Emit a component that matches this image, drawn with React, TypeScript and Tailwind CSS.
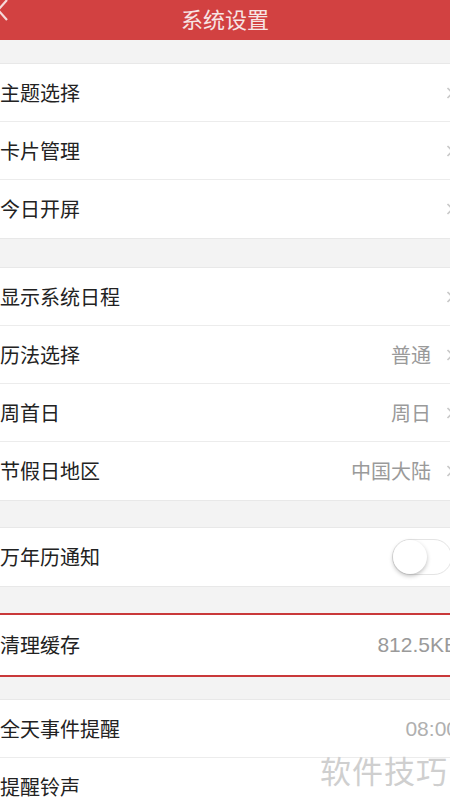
import React from 'react';

const font = { fontFamily: '"Noto Sans CJK SC", "Liberation Sans", sans-serif' };

interface Row {
  label: string;
  value?: string;
  arrow?: boolean;
}

const Chevron: React.FC = () => (
  <svg width="8" height="12" viewBox="0 0 8 12" className="shrink-0">
    <path d="M1.5 1 L6.5 6 L1.5 11" fill="none" stroke="#c9c9c9" strokeWidth="1.6" />
  </svg>
);

const SettingRow: React.FC<{ row: Row; last?: boolean }> = ({ row, last }) => (
  <div className={`flex h-[58px] items-center justify-between bg-white ${last ? '' : 'border-b border-[#ececec]'}`}>
    <span className="text-[20px] text-[#222]">{row.label}</span>
    <div className="mr-[-4px] flex items-center gap-[15px]">
      {row.value && <span className="text-[20px] text-[#9a9a9a]">{row.value}</span>}
      {row.arrow && <Chevron />}
    </div>
  </div>
);

const Group: React.FC<{ rows: Row[] }> = ({ rows }) => (
  <div className="border-y border-[#e8e8e8] bg-white">
    {rows.map((r, i) => (
      <SettingRow key={r.label} row={r} last={i === rows.length - 1} />
    ))}
  </div>
);

export default function App() {
  return (
    <div className="relative h-[801px] w-[450px] overflow-hidden bg-[#f3f3f3]" style={font}>
      {/* header */}
      <div className="relative flex h-[40px] items-center justify-center bg-[#d24141]">
        <svg width="12" height="24" viewBox="0 0 12 24" className="absolute left-[-4px] top-[-1px]">
          <path d="M11 1 L2 11 L11 21" fill="none" stroke="#f6dada" strokeWidth="2.2" />
        </svg>
        <span className="pb-[4px] text-[22px] text-[#f7e4e4]">系统设置</span>
      </div>

      <div className="h-[23px]" />
      <Group
        rows={[
          { label: '主题选择', arrow: true },
          { label: '卡片管理', arrow: true },
          { label: '今日开屏', arrow: true },
        ]}
      />

      <div className="h-[28px]" />
      <Group
        rows={[
          { label: '显示系统日程', arrow: true },
          { label: '历法选择', value: '普通', arrow: true },
          { label: '周首日', value: '周日', arrow: true },
          { label: '节假日地区', value: '中国大陆', arrow: true },
        ]}
      />

      <div className="h-[26px]" />
      <div className="border-y border-[#e8e8e8] bg-white">
        <div className="flex h-[58px] items-center justify-between">
          <span className="text-[20px] text-[#222]">万年历通知</span>
          <div className="mr-[-2px] flex h-[36px] w-[60px] items-center rounded-full border border-[#e4e4e4] bg-white">
            <div className="h-[34px] w-[34px] rounded-full bg-white shadow-[0_2px_4px_rgba(0,0,0,0.25)]" />
          </div>
        </div>
      </div>

      <div className="h-[26px]" />
      <div className="border-y-2 border-[#c9383a] bg-white">
        <div className="flex h-[60px] items-center justify-between">
          <span className="text-[20px] text-[#222]">清理缓存</span>
          <span className="mr-[-8px] text-[21px] text-[#9a9a9a]" style={{ fontFamily: '"Liberation Sans", sans-serif' }}>
            812.5KB
          </span>
        </div>
      </div>

      <div className="h-[22px]" />
      <div className="border-t border-[#e8e8e8] bg-white">
        <div className="flex h-[58px] items-center justify-between border-b border-[#ececec]">
          <span className="text-[20px] text-[#222]">全天事件提醒</span>
          <span className="mr-[-8px] text-[21px] text-[#b0b0b0]" style={{ fontFamily: '"Liberation Sans", sans-serif' }}>
            08:00
          </span>
        </div>
        <div className="flex h-[58px] items-center justify-between">
          <span className="text-[20px] text-[#222]">提醒铃声</span>
        </div>
      </div>

      {/* watermark */}
      <div className="absolute left-[320px] top-[747px] text-[31px] tracking-[1px] text-[#cfcfcf]">软件技巧</div>
    </div>
  );
}
